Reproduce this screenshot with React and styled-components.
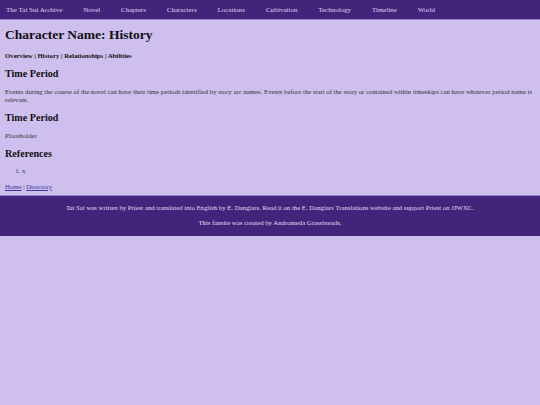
import React from 'react';
import styled, { createGlobalStyle } from 'styled-components';

const BASE = 6.75;

const GlobalStyle = createGlobalStyle`
  html, body {
    margin: 0;
    padding: 0;
    background: #cfbfee;
  }
  body {
    font-family: 'Liberation Serif', 'Times New Roman', serif;
    font-size: ${BASE}px;
    line-height: 8px;
    color: #333;
  }
`;

const NAV_ITEMS = [
  'The Tai Sui Archive',
  'Novel',
  'Chapters',
  'Characters',
  'Locations',
  'Cultivation',
  'Technology',
  'Timeline',
  'World',
];

const NavBar = styled.nav`
  display: flex;
  align-items: center;
  gap: 20.8px;
  height: 19px;
  padding: 0 6px;
  background: #42257a;
  border-bottom: 1px solid #9a80d2;
`;

const NavLink = styled.a`
  color: #ddd3f2;
  font-size: 7px;
  text-decoration: none;
`;

const Main = styled.main`
  padding: 0 5px;
  overflow: hidden;
`;

const Title = styled.h1`
  font-size: ${BASE * 2}px;
  line-height: 1.15;
  margin: 6.5px 0 9.7px;
  color: #111;
`;

const SubNav = styled.p`
  font-weight: bold;
  color: #111;
  margin: 7.1px 0;
`;

const Heading = styled.h2`
  font-size: ${BASE * 1.5}px;
  line-height: 1.15;
  margin: 8.4px 0 7.9px;
  color: #111;
`;

const Text = styled.p`
  margin: 7.1px 0;
`;

const RefList = styled.ol`
  margin: 7.1px 0;
  padding-left: 17px;
`;

const LinkRow = styled.p`
  margin: 7.1px 0 4.3px;

  a {
    color: #3b3799;
  }
`;

const Footer = styled.footer`
  background: #42257a;
  border-top: 1px solid #9a80d2;
  padding: 1px 5px 2px;
  text-align: center;
  color: #e2d9f4;
`;

const FooterLine = styled.p`
  margin: 6.9px 0;
`;

export default function App() {
  return (
    <>
      <GlobalStyle />
      <NavBar>
        {NAV_ITEMS.map((item) => (
          <NavLink key={item} href="#">
            {item}
          </NavLink>
        ))}
      </NavBar>
      <Main>
        <Title>Character Name: History</Title>
        <SubNav>Overview | History | Relationships | Abilities</SubNav>
        <Heading>Time Period</Heading>
        <Text>
          Events during the course of the novel can have their time periods
          identified by story arc names. Events before the start of the story
          or contained within timeskips can have whatever period name is
          relevant.
        </Text>
        <Heading>Time Period</Heading>
        <Text>Placeholder</Text>
        <Heading>References</Heading>
        <RefList>
          <li>x</li>
        </RefList>
        <LinkRow>
          <a href="#">Home</a> | <a href="#">Directory</a>
        </LinkRow>
      </Main>
      <Footer>
        <FooterLine>
          <em>Tai Sui</em> was written by Priest and translated into English by
          E. Danglars. Read it on the E. Danglars Translations website and
          support Priest on JJWXC.
        </FooterLine>
        <FooterLine>This fansite was created by Andromeda Grassbreads.</FooterLine>
      </Footer>
    </>
  );
}
